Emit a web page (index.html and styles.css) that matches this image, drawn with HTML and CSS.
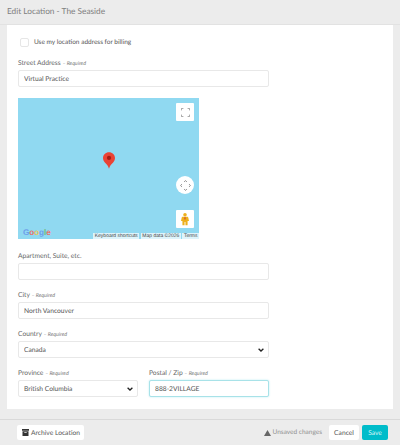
FILE: index.html
```html
<!DOCTYPE html>
<html lang="en">
<head>
  <meta charset="utf-8">
  <title>Edit Location - The Seaside</title>
  <link rel="stylesheet" href="styles.css">
</head>
<body>
  <div class="page">
    <header class="top-bar">Edit Location - The Seaside</header>

    <form class="card">
      <label class="check-row">
        <input type="checkbox" class="check">
        <span>Use my location address for billing</span>
      </label>

      <div class="field field-street">
        <label class="field-label">Street Address <em>– Required</em></label>
        <input class="control" type="text" value="Virtual Practice">
      </div>

      <!-- Map -->
      <div class="map">
        <button type="button" class="map-btn map-full" aria-label="Full screen">
          <svg width="9" height="9" viewBox="0 0 9 9" fill="none" stroke="#8a8a8a" stroke-width="0.800">
            <path d="M.4 2.400V.4h2M6.600.4h2v2M8.600 6.600v2h-2M2.400 8.600h-2v-2"/>
          </svg>
        </button>

        <svg class="map-pin" width="12" height="17" viewBox="0 0 13 18">
          <path fill="#ea4335" d="M6.500 0C2.900 0 0 2.900 0 6.400c0 2 .9 3.500 2 4.800 1.700 1.900 3.700 3.400 4.500 6.800.8-3.400 2.800-4.900 4.500-6.800 1.100-1.300 2-2.800 2-4.800C13 2.900 10.100 0 6.500 0z"/>
          <circle cx="6.500" cy="6.200" r="2.300" fill="#a51c14"/>
        </svg>

        <button type="button" class="map-btn map-pan" aria-label="Pan">
          <svg width="11" height="11" viewBox="0 0 12 12" fill="none" stroke="#777" stroke-width="0.900">
            <path d="M4.500 2 6 .7 7.500 2M4.500 10 6 11.300 7.500 10M2 4.500.7 6 2 7.500M10 4.500 11.300 6 10 7.500"/>
          </svg>
        </button>

        <button type="button" class="map-btn map-peg" aria-label="Street view">
          <svg width="8" height="14" viewBox="0 0 9 14">
            <circle cx="4.500" cy="2.200" r="2" fill="#eeb01c"/>
            <path fill="#eeb01c" d="M2.200 4.500h4.600c.9 0 1.400.6 1.500 1.300L9 9.300H7.400V14H5V10.500H4V14H1.600V9.300H0l.7-3.500c.1-.7.600-1.300 1.500-1.300z"/>
            <path fill="#d9622b" d="M4.500 4.500 5.700 6 4.500 8.500 3.300 6z"/>
          </svg>
        </button>

        <span class="map-logo"><i class="g-blue">G</i><i class="g-red">o</i><i class="g-yellow">o</i><i class="g-blue">g</i><i class="g-green">l</i><i class="g-red">e</i></span>

        <div class="map-attr">
          <span>Keyboard shortcuts</span>
          <span>Map data ©2026</span>
          <span>Terms</span>
        </div>
      </div>

      <div class="field field-apt">
        <label class="field-label">Apartment, Suite, etc.</label>
        <input class="control" type="text">
      </div>

      <div class="field">
        <label class="field-label">City <em>– Required</em></label>
        <input class="control" type="text" value="North Vancouver">
      </div>

      <div class="field">
        <label class="field-label">Country <em>– Required</em></label>
        <div class="select-wrap">
          <select class="control"><option>Canada</option></select>
          <svg class="chevron" width="6" height="4" viewBox="0 0 6 4" fill="none" stroke="#222" stroke-width="1.300"><path d="M.6.7 3 3 5.400.7"/></svg>
        </div>
      </div>

      <div class="field-row">
        <div class="field">
          <label class="field-label">Province <em>– Required</em></label>
          <div class="select-wrap">
            <select class="control"><option>British Columbia</option></select>
            <svg class="chevron" width="6" height="4" viewBox="0 0 6 4" fill="none" stroke="#222" stroke-width="1.300"><path d="M.6.7 3 3 5.400.7"/></svg>
          </div>
        </div>
        <div class="field">
          <label class="field-label">Postal / Zip <em>– Required</em></label>
          <input class="control is-focus" type="text" value="888-2VILLAGE">
        </div>
      </div>
    </form>

    <footer class="bottom-bar">
      <button type="button" class="btn btn-archive">
        <svg width="7" height="7" viewBox="0 0 7 7" fill="#333"><path d="M0 0h7v1.800H0zM.5 2.300h6V7h-6z"/><path fill="#fff" d="M2.300 3.200h2.400v.7H2.300z"/></svg>
        Archive Location
      </button>
      <span class="unsaved">
        <svg width="7" height="6" viewBox="0 0 7 6"><path fill="#666" d="M3.500 0 7 6H0z"/></svg>
        Unsaved changes
      </span>
      <button type="button" class="btn btn-cancel">Cancel</button>
      <button type="button" class="btn btn-save">Save</button>
    </footer>
  </div>
</body>
</html>
```

FILE: styles.css
```css
* { box-sizing: border-box; margin: 0; padding: 0; }

body {
  font-family: 'Lato', 'Liberation Sans', sans-serif;
  text-rendering: geometricPrecision;
  background: #ececec;
  color: #555;
}

.page {
  display: flex;
  flex-direction: column;
  height: 445px;
  overflow: hidden;
}

/* Header */
.top-bar {
  flex: none;
  height: 25px;
  padding: 0 7px;
  line-height: 23px;
  font-size: 8.300px;
  color: #808080;
  background: #ececec;
  border-bottom: 1px solid #e2e2e2;
}

/* Card */
.card {
  flex: none;
  height: 384px;
  margin: 0 7px;
  padding: 13px 11px 0;
  background: #fff;
}

.check-row {
  display: flex;
  align-items: center;
  gap: 5px;
  height: 9px;
  margin-left: 2px;
  font-size: 6.500px;
  color: #555;
}
.check {
  appearance: none;
  width: 9px;
  height: 9px;
  background: #fff;
  border: 1px solid #e6e6e6;
  border-radius: 2px;
}

.field { display: flex; flex-direction: column; }
.card > .field { width: 251px; margin-top: 6px; }
.card > .field-street { margin-top: 7px; }
.card > .field-apt { margin-top: 8px; }

.field-label {
  height: 16px;
  line-height: 18px;
  font-size: 6.700px;
  color: #666;
}
.field-label em {
  font-size: 5.300px;
  color: #777;
}

.control {
  appearance: none;
  display: block;
  width: 100%;
  height: 17px;
  padding: 0 5px;
  font-family: inherit;
  font-size: 6.700px;
  color: #555;
  background: #fff;
  border: 1px solid #e8e8e8;
  border-radius: 2px;
  outline: 0;
  text-rendering: geometricPrecision;
}
.control.is-focus {
  border-color: #a8e2e8;
  box-shadow: 0 0 2px rgba(0,188,212,0.3);
}

.select-wrap { position: relative; }
.chevron {
  position: absolute;
  top: 7px;
  right: 5px;
  pointer-events: none;
}

.field-row {
  display: grid;
  grid-template-columns: 120px 120px;
  gap: 11px;
  width: 251px;
  margin-top: 6px;
}

/* Map */
.map {
  position: relative;
  width: 181px;
  height: 141px;
  margin-top: 11px;
  background: #90d9f1;
}
.map-btn {
  position: absolute;
  right: 5px;
  display: flex;
  align-items: center;
  justify-content: center;
  width: 18px;
  height: 18px;
  background: #fff;
  border: 0;
  border-radius: 1px;
}
.map-full { top: 5px; }
.map-pan { top: 78px; border-radius: 50%; }
.map-peg { top: 112px; }
.map-pin { position: absolute; left: 85px; top: 54px; }

.map-logo {
  position: absolute;
  left: 5px;
  bottom: 1px;
  font-family: 'Liberation Sans', sans-serif;
  font-size: 8.200px;
  font-weight: 700;
  line-height: 10px;
  letter-spacing: -0.1px;
}
.map-logo i { font-style: normal; }
.g-blue { color: #6d9eea; }
.g-red { color: #e8736a; }
.g-yellow { color: #e6c65c; }
.g-green { color: #6dbb7d; }

.map-attr {
  position: absolute;
  right: 0;
  bottom: 0;
  display: flex;
  gap: 1.500px;
  height: 6px;
  font-family: 'Liberation Sans', sans-serif;
  font-size: 5px;
  line-height: 6px;
  color: #444;
}
.map-attr span {
  padding: 0 1.500px;
  background: rgba(255,255,255,0.7);
}

/* Footer */
.bottom-bar {
  display: flex;
  align-items: center;
  flex: none;
  height: 26px;
  margin-top: 10px;
  padding: 0 12px 0 17px;
  background: #ececec;
  border-top: 1px solid #d9d9d9;
}
.btn {
  height: 15px;
  font-family: inherit;
  font-size: 6.700px;
  color: #555;
  background: #fff;
  border: 0;
  border-radius: 2px;
  text-rendering: geometricPrecision;
}
.btn-archive {
  display: flex;
  align-items: center;
  gap: 2px;
  width: 67px;
  padding-left: 5px;
}
.unsaved {
  display: flex;
  align-items: center;
  gap: 2px;
  margin-left: auto;
  font-size: 6.500px;
  color: #909090;
}
.btn-cancel { width: 30px; margin-left: 7px; }
.btn-save {
  width: 26px;
  margin-left: 3px;
  color: #d8f5f7;
  background: #00bcca;
}
```
